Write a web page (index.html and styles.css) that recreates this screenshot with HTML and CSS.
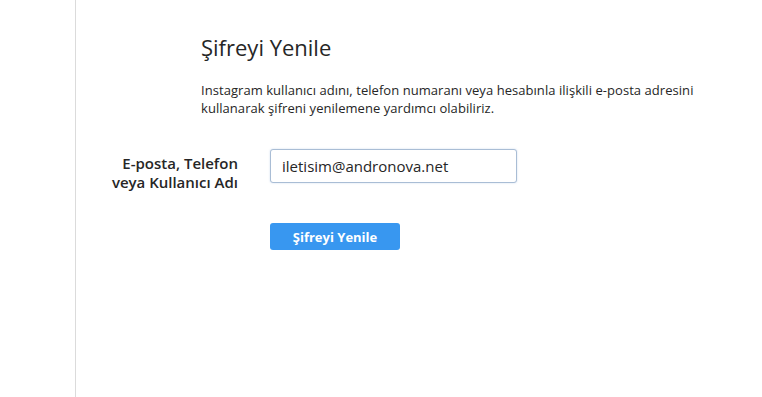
FILE: index.html
```html
<!DOCTYPE html>
<html lang="tr">
<head>
    <meta charset="UTF-8">
    <meta name="viewport" content="width=device-width, initial-scale=1.0">
    <title>Şifreyi Yenile</title>
    <link rel="stylesheet" href="styles.css">
</head>
<body>
    <div class="page">
        <div class="content">
            <h1>Şifreyi Yenile</h1>
            <p class="intro">Instagram kullanıcı adını, telefon numaranı veya hesabınla ilişkili e-posta adresini kullanarak şifreni yenilemene yardımcı olabiliriz.</p>

            <form class="reset-form" onsubmit="return false;">
                <div class="form-row">
                    <label for="userInput">E-posta, Telefon<br>veya Kullanıcı Adı</label>
                    <input id="userInput" type="text" value="iletisim@andronova.net">
                </div>
                <div class="form-row">
                    <span></span>
                    <div>
                        <button class="submit-btn" type="submit">Şifreyi Yenile</button>
                    </div>
                </div>
            </form>
        </div>
    </div>
</body>
</html>
```

FILE: styles.css
```css
* {
    margin: 0;
    padding: 0;
    box-sizing: border-box;
}

body {
    font-family: "Open Sans", "Noto Sans", sans-serif;
    background: #fff;
    color: #262626;
}

.page {
    margin-left: 75px;
    border-left: 1px solid #dbdbdb;
    min-height: 100vh;
}

.content {
    padding-top: 32px;
}

h1 {
    font-size: 22px;
    font-weight: 400;
    line-height: 30px;
    margin-left: 125px;
    margin-bottom: 19px;
}

.intro {
    font-size: 13px;
    line-height: 18px;
    margin-left: 125px;
    width: 520px;
    letter-spacing: 0.05px;
    margin-bottom: 32px;
}

.form-row {
    display: grid;
    grid-template-columns: 162px 247px;
    column-gap: 32px;
    align-items: start;
    margin-bottom: 31px;
}

.form-row label {
    text-align: right;
    font-size: 15px;
    font-weight: 600;
    line-height: 19px;
    margin-top: 5px;
}

#userInput {
    width: 100%;
    height: 34px;
    padding: 0 11px;
    border: 1px solid #a9bdd5;
    border-radius: 3px;
    font-family: inherit;
    font-size: 15px;
    color: #262626;
    box-shadow: 0 0 2px rgba(80, 130, 200, 0.3);
}

#userInput:focus {
    outline: none;
}

.submit-btn {
    background: #3897f0;
    color: #fff;
    border: none;
    border-radius: 3px;
    width: 130px;
    height: 27px;
    font-family: inherit;
    font-size: 13px;
    font-weight: 700;
    cursor: pointer;
}
```
